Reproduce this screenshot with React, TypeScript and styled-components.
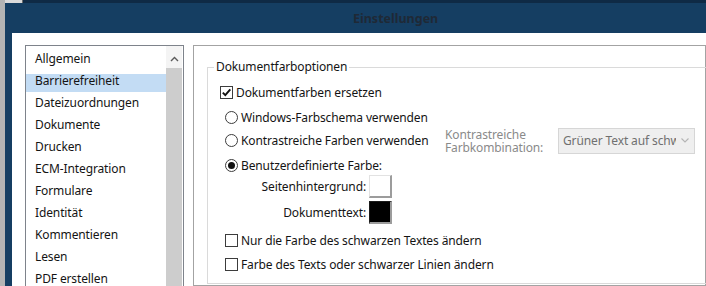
import React from 'react';
import styled, { createGlobalStyle } from 'styled-components';

const Global = createGlobalStyle`
  html, body { margin: 0; padding: 0; background: #b4b4b4; }
  body {
    font-family: "Noto Sans", "Open Sans", sans-serif;
    font-size: 12px;
    letter-spacing: -0.12px;
    color: #141414;
  }
  * { box-sizing: border-box; }
`;

const Screen = styled.div`
  position: relative;
  display: flex;
  width: 706px;
  height: 286px;
  overflow: hidden;
`;

const LeftStrip = styled.div`
  flex: none;
  width: 5px;
  background: #b4b4b4;
`;

const Corner = styled.div`
  position: absolute;
  left: 5px;
  top: 0;
  width: 18px;
  height: 3px;
  background: #dadada;
  border-right: 1px solid #6a6a6a;
`;

const Window = styled.div`
  flex: 1;
  min-width: 0;
  display: flex;
  flex-direction: column;
  background: #153e62;
`;

const TitleBar = styled.div`
  flex: none;
  height: 33px;
  border-top: 3px solid #0f2a45;
  display: flex;
  align-items: center;
  padding-left: 348px;
  font-weight: bold;
  font-size: 12.5px;
  letter-spacing: 0;
  color: #1f2936;
`;

const Client = styled.div`
  flex: 1;
  min-height: 0;
  margin-left: 7px;
  background: #fff;
  display: flex;
  gap: 9px;
  padding: 12px 0 0 13px;
`;

const ListBox = styled.div`
  flex: none;
  width: 159px;
  height: 260px;
  border: 1px solid #7e838b;
  display: flex;
`;

const Items = styled.div`
  flex: 1;
  display: flex;
  flex-direction: column;
  gap: 4px;
  padding-top: 6px;
`;

const Item = styled.div<{ $selected?: boolean }>`
  height: 18px;
  line-height: 13px;
  padding: 0 0 5px 9px;
  white-space: nowrap;
  background: ${(p) => (p.$selected ? '#c3dcf4' : 'transparent')};
`;

const ScrollBar = styled.div`
  flex: none;
  width: 17px;
  display: flex;
  flex-direction: column;
  padding-right: 1px;
`;

const ScrollButton = styled.div`
  flex: none;
  height: 22px;
  display: flex;
  align-items: center;
  justify-content: center;
  padding-top: 4px;
  background: #f4f4f4;
`;

const ScrollTrack = styled.div`
  flex: 1;
  background: #cdcdcd;
`;

const Panel = styled.div`
  flex: 1;
  min-width: 0;
  border: 1px solid #a3a3a3;
  padding: 13px 0 0 13px;
`;

const Group = styled.fieldset`
  margin: 0;
  width: 560px;
  border: 1px solid #dadada;
  padding: 0 0 2px 12px;
`;

const Legend = styled.legend`
  margin-left: -6px;
  padding: 0 2px;
  line-height: 16px;
`;

const Row = styled.div<{ $h: number; $indent?: number }>`
  height: ${(p) => p.$h}px;
  display: flex;
  align-items: center;
  padding-left: ${(p) => p.$indent ?? 0}px;
  white-space: nowrap;
`;

const Box = styled.span`
  flex: none;
  width: 13px;
  height: 13px;
  border: 1px solid #3c3c3c;
  background: #fff;
  display: flex;
  align-items: center;
  justify-content: center;
  margin-right: 3px;
`;

const Circle = styled.span`
  flex: none;
  width: 13px;
  height: 13px;
  border-radius: 50%;
  border: 1px solid #3c3c3c;
  background: #fff;
  display: flex;
  align-items: center;
  justify-content: center;
  margin-right: 3px;
`;

const Dot = styled.span`
  width: 7px;
  height: 7px;
  border-radius: 50%;
  background: #111;
`;

const OptionCell = styled.div`
  flex: none;
  width: 220px;
  display: flex;
  align-items: center;
`;

const ComboLabel = styled.div`
  flex: none;
  width: 113px;
  color: #8a8a8a;
  line-height: 13px;
  white-space: normal;
`;

const Select = styled.div`
  flex: none;
  width: 137px;
  height: 26px;
  border: 1px solid #d6d6d6;
  background: #efefef;
  display: flex;
  align-items: center;
  padding: 0 0 0 4px;
  color: #707070;
`;

const SelectText = styled.span`
  width: 113px;
  overflow: hidden;
  white-space: nowrap;
`;

const SelectArrow = styled.span`
  flex: 1;
  display: flex;
  justify-content: center;
`;

const SwatchLabel = styled.span`
  flex: none;
  width: 125px;
  text-align: right;
  margin-right: 3px;
`;

const Swatch = styled.span<{ $color: string }>`
  flex: none;
  width: 23px;
  height: 23px;
  background: ${(p) => p.$color};
  border-top: 1px solid ${(p) => (p.$color === '#000' ? '#1a1a1a' : '#e2e2e2')};
  border-left: 1px solid ${(p) => (p.$color === '#000' ? '#1a1a1a' : '#e2e2e2')};
  border-right: 2px solid #9c9c9c;
  border-bottom: 2px solid #9c9c9c;
`;

const Check = () => (
  <svg width="11" height="11" viewBox="0 0 11 11">
    <path d="M1.8 5.6 L4.3 8.2 L9.3 2.3" fill="none" stroke="#111" strokeWidth="1.9" />
  </svg>
);

const Checkbox: React.FC<{ checked?: boolean; label: string }> = ({ checked, label }) => (
  <>
    <Box>{checked && <Check />}</Box>
    <span>{label}</span>
  </>
);

const Radio: React.FC<{ checked?: boolean; label: string }> = ({ checked, label }) => (
  <>
    <Circle>{checked && <Dot />}</Circle>
    <span>{label}</span>
  </>
);

const items = [
  'Allgemein',
  'Barrierefreiheit',
  'Dateizuordnungen',
  'Dokumente',
  'Drucken',
  'ECM-Integration',
  'Formulare',
  'Identität',
  'Kommentieren',
  'Lesen',
  'PDF erstellen',
];

export default function App() {
  return (
    <>
      <Global />
      <Screen>
        <LeftStrip />
        <Corner />
        <Window>
          <TitleBar>Einstellungen</TitleBar>
          <Client>
            <ListBox>
              <Items>
                {items.map((t) => (
                  <Item key={t} $selected={t === 'Barrierefreiheit'}>
                    {t}
                  </Item>
                ))}
              </Items>
              <ScrollBar>
                <ScrollButton>
                  <svg width="9" height="6" viewBox="0 0 9 6">
                    <polyline points="1,5 4.5,1.5 8,5" fill="none" stroke="#5a5a5a" strokeWidth="1.4" />
                  </svg>
                </ScrollButton>
                <ScrollTrack />
              </ScrollBar>
            </ListBox>
            <Panel>
              <Group>
                <Legend>Dokumentfarboptionen</Legend>
                <Row $h={6} />
                <Row $h={23}>
                  <Checkbox checked label="Dokumentfarben ersetzen" />
                </Row>
                <Row $h={27} $indent={5}>
                  <Radio label="Windows-Farbschema verwenden" />
                </Row>
                <Row $h={19} $indent={5}>
                  <OptionCell>
                    <Radio label="Kontrastreiche Farben verwenden" />
                  </OptionCell>
                  <ComboLabel>
                    Kontrastreiche
                    <br />
                    Farbkombination:
                  </ComboLabel>
                  <Select>
                    <SelectText>Grüner Text auf schwarzem Hintergrund</SelectText>
                    <SelectArrow>
                      <svg width="8" height="5" viewBox="0 0 8 5">
                        <polyline points="0.5,0.5 4,4 7.5,0.5" fill="none" stroke="#b4b4b4" strokeWidth="1.1" />
                      </svg>
                    </SelectArrow>
                  </Select>
                </Row>
                <Row $h={30} $indent={5}>
                  <Radio checked label="Benutzerdefinierte Farbe:" />
                </Row>
                <Row $h={12} $indent={21}>
                  <SwatchLabel>Seitenhintergrund:</SwatchLabel>
                  <Swatch $color="#fff" />
                </Row>
                <Row $h={40} $indent={21}>
                  <SwatchLabel>Dokumenttext:</SwatchLabel>
                  <Swatch $color="#000" />
                </Row>
                <Row $h={16} $indent={5}>
                  <Checkbox label="Nur die Farbe des schwarzen Textes ändern" />
                </Row>
                <Row $h={33} $indent={5}>
                  <Checkbox label="Farbe des Texts oder schwarzer Linien ändern" />
                </Row>
              </Group>
            </Panel>
          </Client>
        </Window>
      </Screen>
    </>
  );
}
